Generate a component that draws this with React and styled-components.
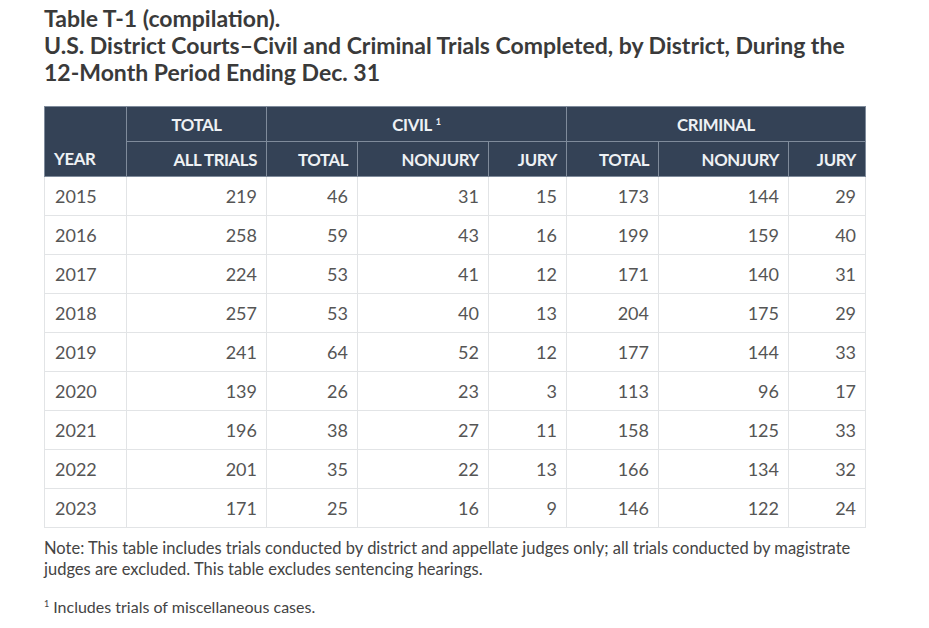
import React from 'react';
import styled, { createGlobalStyle } from 'styled-components';

const GlobalStyle = createGlobalStyle`
  html, body {
    margin: 0;
    padding: 0;
    background: #ffffff;
  }
  body {
    font-family: Lato, "Open Sans", "Liberation Sans", sans-serif;
    color: #333;
  }
`;

const Page = styled.div`
  padding: 5px 44px 0 44px;
`;

const Title = styled.h1`
  margin: 0;
  font-size: 23px;
  line-height: 27px;
  font-weight: 700;
  color: #3a3a3a;
  white-space: nowrap;
`;

const Table = styled.table`
  margin-top: 20px;
  border-collapse: collapse;
  table-layout: fixed;
  width: 821px;
  font-size: 18px;
  color: #555;
`;

const HeadCell = styled.th`
  background: #344256;
  color: #eef1f4;
  font-weight: 700;
  font-size: 16.8px;
  letter-spacing: -0.4px;
  height: 35px;
  padding: 0 9px;
  box-sizing: border-box;
  border: 1px solid #7f8b9b;
  text-align: ${(p) => p.$align || 'right'};
  vertical-align: ${(p) => p.$valign || 'middle'};
  padding-bottom: ${(p) => (p.$valign === 'bottom' ? '7px' : '0')};
`;

const Sup = styled.sup`
  font-size: 9px;
  vertical-align: 6px;
  margin-left: 4px;
`;

const Cell = styled.td`
  height: 39px;
  padding: 0 9px 0 10px;
  box-sizing: border-box;
  border: 1px solid #e2e4e6;
  text-align: ${(p) => (p.$left ? 'left' : 'right')};
`;

const Note = styled.p`
  margin: 10px 0 0 0;
  font-size: 16.5px;
  line-height: 21px;
  color: #444;
  width: 825px;
`;

const Footnote = styled.p`
  margin: 13px 0 0 0;
  font-size: 16px;
  line-height: 21px;
  color: #444;
`;

const FootSup = styled.sup`
  font-size: 9px;
  vertical-align: 6px;
  margin-right: 4px;
`;

const widths = [82, 140, 91, 131, 78, 92, 130, 77];

const rows = [
  ['2015', 219, 46, 31, 15, 173, 144, 29],
  ['2016', 258, 59, 43, 16, 199, 159, 40],
  ['2017', 224, 53, 41, 12, 171, 140, 31],
  ['2018', 257, 53, 40, 13, 204, 175, 29],
  ['2019', 241, 64, 52, 12, 177, 144, 33],
  ['2020', 139, 26, 23, 3, 113, 96, 17],
  ['2021', 196, 38, 27, 11, 158, 125, 33],
  ['2022', 201, 35, 22, 13, 166, 134, 32],
  ['2023', 171, 25, 16, 9, 146, 122, 24],
];

function App() {
  return (
    <>
      <GlobalStyle />
      <Page>
        <Title>
          Table T-1 (compilation).
          <br />
          U.S. District Courts–Civil and Criminal Trials Completed, by District, During the
          <br />
          12-Month Period Ending Dec. 31
        </Title>

        <Table>
          <colgroup>
            {widths.map((w, i) => (
              <col key={i} style={{ width: `${w}px` }} />
            ))}
          </colgroup>
          <thead>
            <tr>
              <HeadCell rowSpan={2} $align="left" $valign="bottom">YEAR</HeadCell>
              <HeadCell $align="center">TOTAL</HeadCell>
              <HeadCell colSpan={3} $align="center">
                CIVIL<Sup>1</Sup>
              </HeadCell>
              <HeadCell colSpan={3} $align="center">CRIMINAL</HeadCell>
            </tr>
            <tr>
              <HeadCell>ALL TRIALS</HeadCell>
              <HeadCell>TOTAL</HeadCell>
              <HeadCell>NONJURY</HeadCell>
              <HeadCell>JURY</HeadCell>
              <HeadCell>TOTAL</HeadCell>
              <HeadCell>NONJURY</HeadCell>
              <HeadCell>JURY</HeadCell>
            </tr>
          </thead>
          <tbody>
            {rows.map((row) => (
              <tr key={row[0]}>
                {row.map((v, i) => (
                  <Cell key={i} $left={i === 0}>{v}</Cell>
                ))}
              </tr>
            ))}
          </tbody>
        </Table>

        <Note>
          Note: This table includes trials conducted by district and appellate judges only; all trials conducted by magistrate judges are excluded. This table excludes sentencing hearings.
        </Note>
        <Footnote>
          <FootSup>1</FootSup>Includes trials of miscellaneous cases.
        </Footnote>
      </Page>
    </>
  );
}

export default App;
